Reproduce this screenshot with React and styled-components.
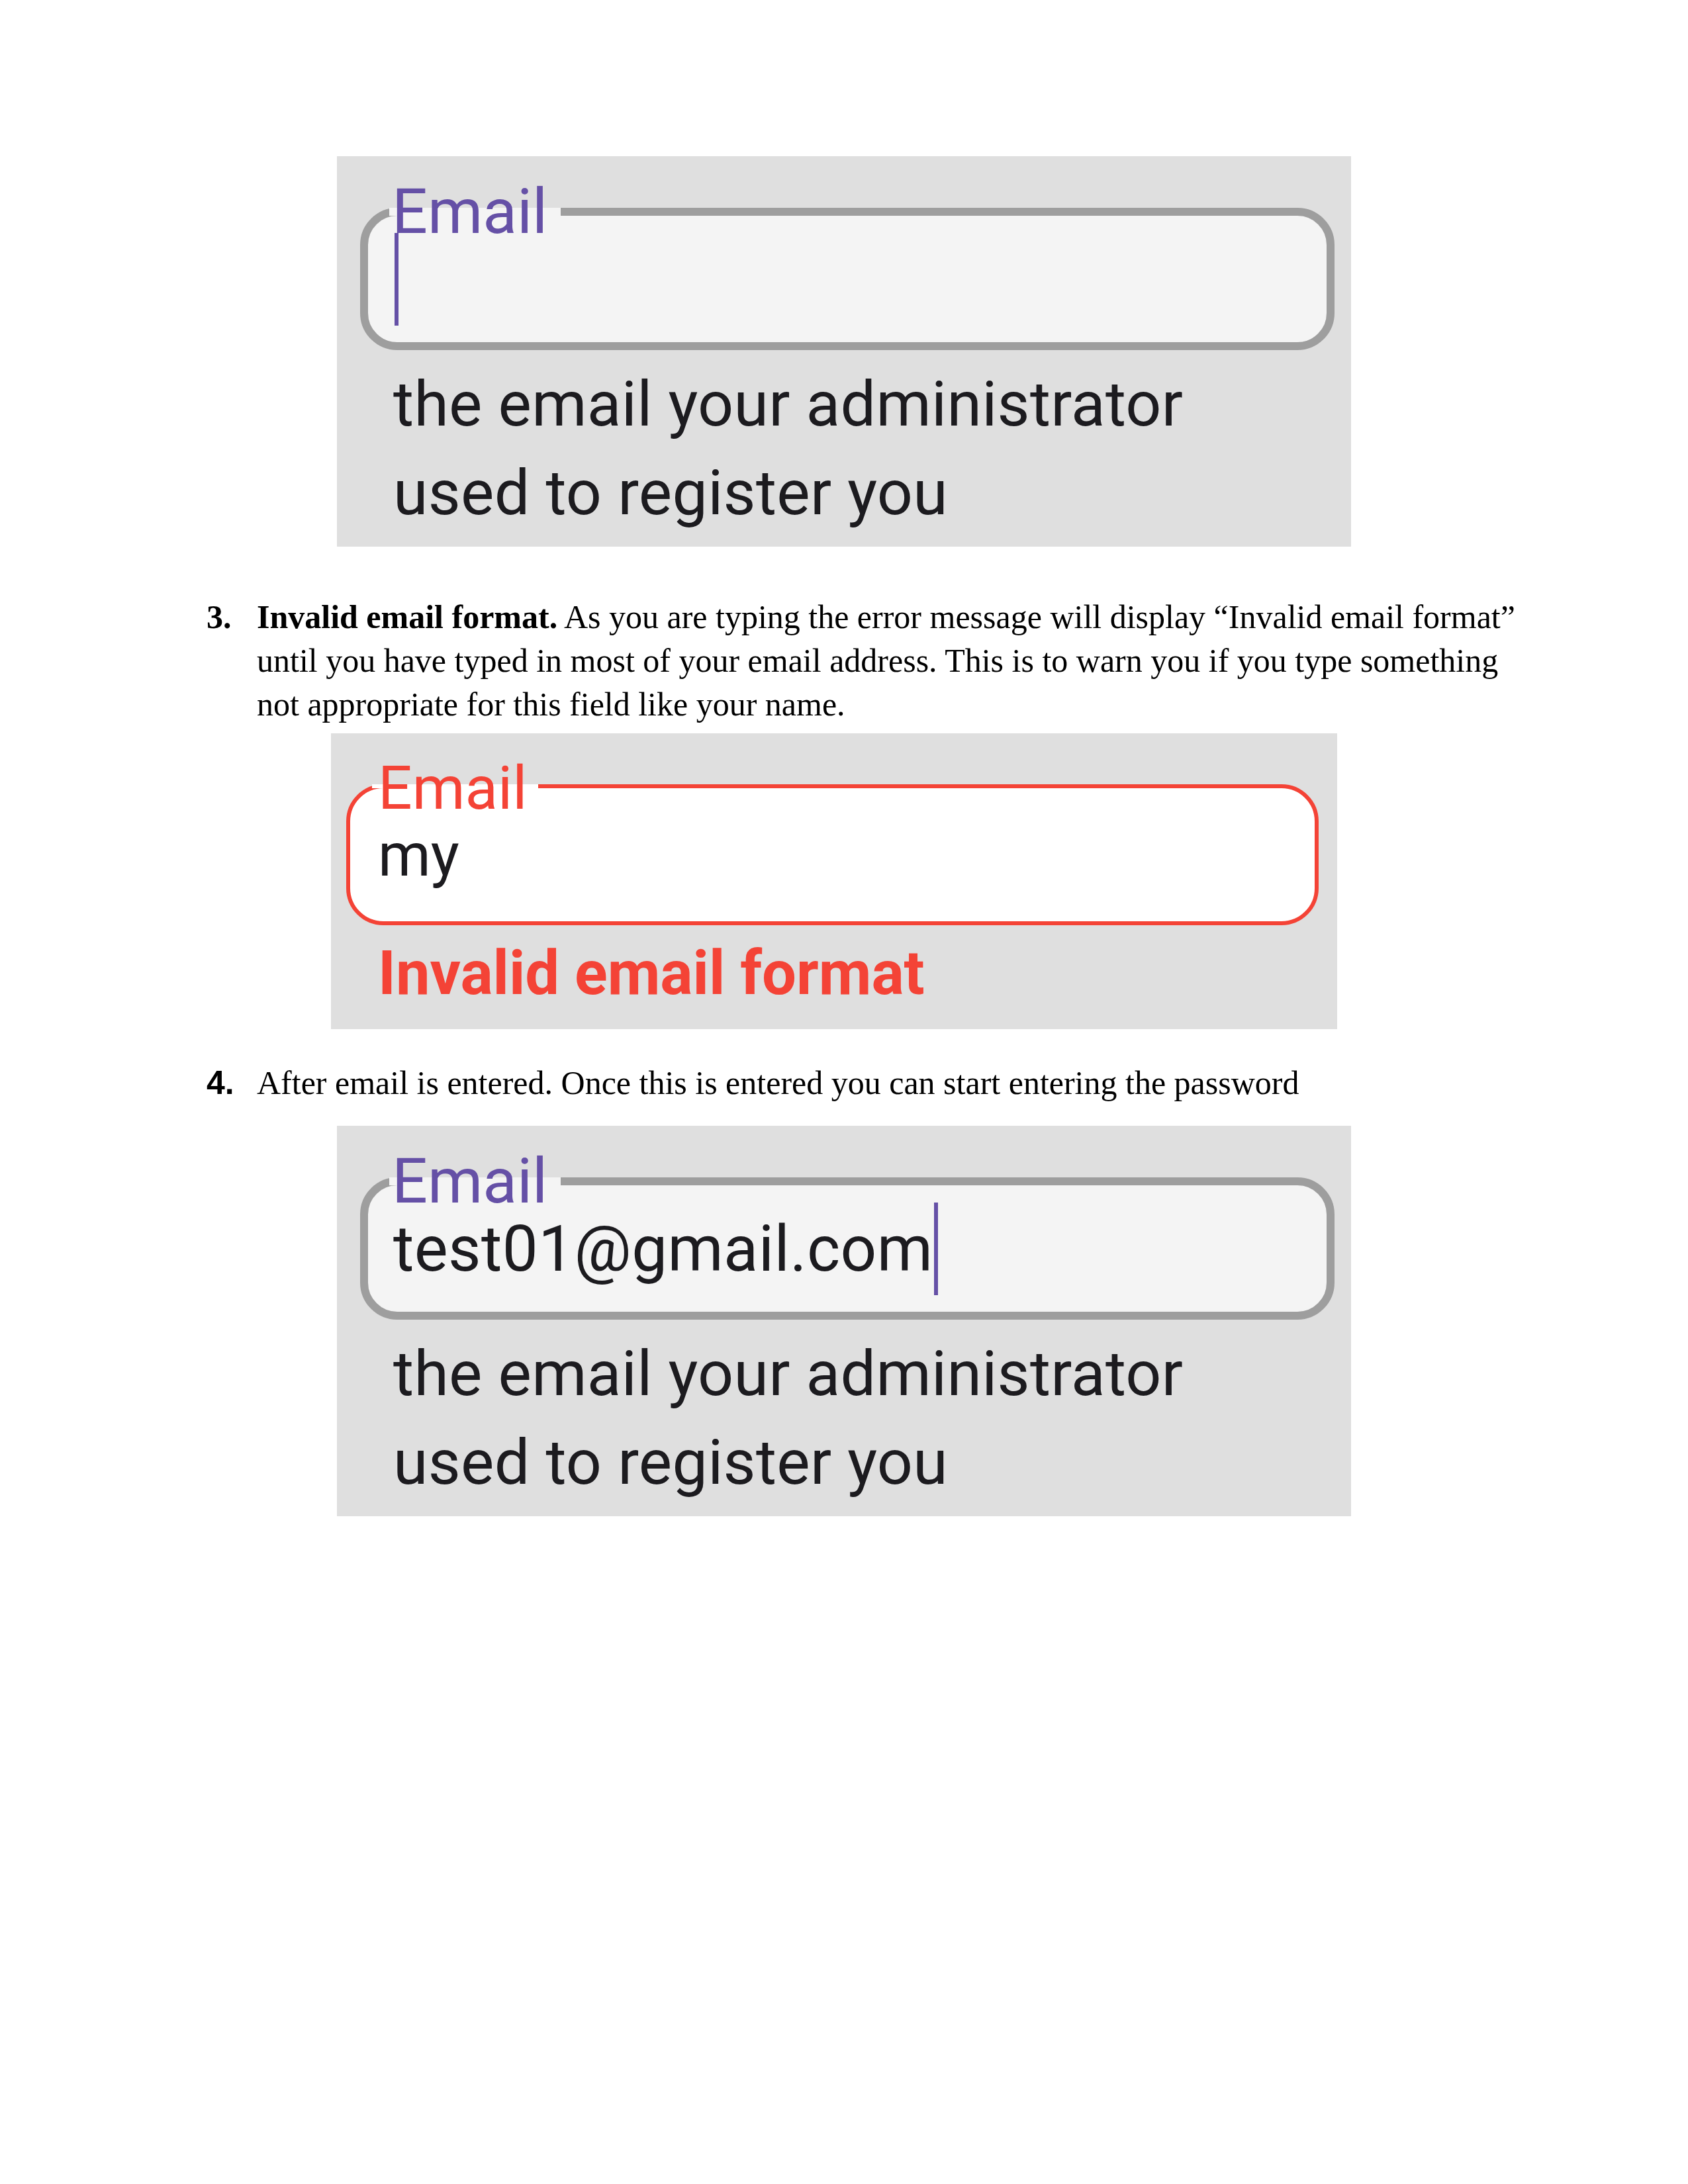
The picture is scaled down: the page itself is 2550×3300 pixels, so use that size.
import React from 'react';
import styled, { createGlobalStyle } from 'styled-components';

const GlobalStyle = createGlobalStyle`
  html, body {
    margin: 0;
    padding: 0;
    background: #ffffff;
  }
`;

const PURPLE = '#6550a6';
const RED = '#f44336';
const INK = '#1c1b1f';

const Page = styled.div`
  width: 2550px;
  min-height: 3300px;
  box-sizing: border-box;
  padding-top: 236px;
  display: flex;
  flex-direction: column;
  align-items: flex-start;
  background: #ffffff;
`;

const Panel = styled.div`
  box-sizing: border-box;
  background: #dfdfdf;
  margin-left: ${p => (p.$error ? '500px' : '509px')};
  width: ${p => (p.$error ? '1520px' : '1532px')};
  padding: ${p => (p.$error ? '77px 28px 16px 23px' : '78px 25px 14px 35px')};
  margin-top: ${p => p.$gap || 0}px;
  display: flex;
  flex-direction: column;
`;

const Field = styled.div`
  position: relative;
  box-sizing: border-box;
  border: ${p => (p.$error ? `6px solid ${RED}` : '12px solid #9e9e9e')};
  border-radius: 56px;
  background: ${p => (p.$error ? '#ffffff' : '#f4f4f4')};
  padding: ${p => (p.$error ? '33px 42px 32px' : '26px 38px 25px')};
  font-family: Roboto, "Noto Sans", sans-serif;
  font-size: ${p => (p.$error ? '91px' : '96px')};
  letter-spacing: ${p => (p.$error ? '0' : '0.4px')};
  line-height: ${p => (p.$error ? '136px' : '140px')};
  color: ${INK};
  white-space: nowrap;
`;

const FloatLabel = styled.span`
  position: absolute;
  left: ${p => (p.$error ? '33px' : '32px')};
  top: ${p => (p.$error ? '-53px' : '-62px')};
  padding: ${p => (p.$error ? '0 17px 0 9px' : '0 20px 0 4px')};
  font-size: ${p => (p.$error ? '91px' : '95px')};
  letter-spacing: 0;
  line-height: ${p => (p.$error ? '106px' : '111px')};
  color: ${p => (p.$error ? RED : PURPLE)};
  background: ${p =>
    p.$error
      ? 'linear-gradient(to bottom, transparent 47px, #ffffff 47px, #ffffff 53px, transparent 53px)'
      : 'linear-gradient(to bottom, transparent 50px, #f4f4f4 50px, #f4f4f4 62px, transparent 62px)'};
`;

const Caret = styled.span`
  display: inline-block;
  vertical-align: top;
  width: 6px;
  height: 140px;
  margin-left: 2px;
  background: ${PURPLE};
`;

const Helper = styled.div`
  margin-top: 15px;
  padding-left: 50px;
  font-family: Roboto, "Noto Sans", sans-serif;
  font-size: 95px;
  letter-spacing: 0.3px;
  line-height: 134px;
  color: ${INK};
  white-space: nowrap;
`;

const ErrorText = styled.div`
  margin-top: 5px;
  padding-left: 48px;
  font-family: Roboto, "Noto Sans", sans-serif;
  font-weight: 700;
  font-size: 92px;
  line-height: 136px;
  color: ${RED};
  white-space: nowrap;
`;

const Item = styled.div`
  margin-left: 312px;
  margin-top: ${p => p.$gap}px;
  display: grid;
  grid-template-columns: 76px auto;
  font-family: "Liberation Serif", "Times New Roman", serif;
  font-size: 50px;
  line-height: 66px;
  color: #000000;
  white-space: nowrap;
`;

const Num = styled.span`
  font-weight: 700;
  font-family: ${p => (p.$sans ? '"Liberation Sans", Arial, sans-serif' : '"Liberation Serif", "Times New Roman", serif')};
`;

const Body = styled.div`
  display: flex;
  flex-direction: column;
`;

const Strong = styled.b`
  font-weight: 700;
`;

function EmailField({ value, error, focused }) {
  return (
    <Field $error={error}>
      <FloatLabel $error={error}>Email</FloatLabel>
      {value}
      {focused && <Caret />}
    </Field>
  );
}

export default function App() {
  return (
    <>
      <GlobalStyle />
      <Page>
        <Panel>
          <EmailField value="" focused />
          <Helper>
            the email your administrator
            <br />
            used to register you
          </Helper>
        </Panel>

        <Item $gap={73}>
          <Num>3.</Num>
          <Body>
            <span>
              <Strong>Invalid email format.</Strong> As you are typing the error message will display “Invalid email format”
            </span>
            <span>until you have typed in most of your email address. This is to warn you if you type something</span>
            <span>not appropriate for this field like your name.</span>
          </Body>
        </Item>

        <Panel $error $gap={11}>
          <EmailField value="my" error />
          <ErrorText>Invalid email format</ErrorText>
        </Panel>

        <Item $gap={48}>
          <Num $sans>4.</Num>
          <Body>
            <span>After email is entered. Once this is entered you can start entering the password</span>
          </Body>
        </Item>

        <Panel $gap={32}>
          <EmailField value="test01@gmail.com" focused />
          <Helper>
            the email your administrator
            <br />
            used to register you
          </Helper>
        </Panel>
      </Page>
    </>
  );
}
